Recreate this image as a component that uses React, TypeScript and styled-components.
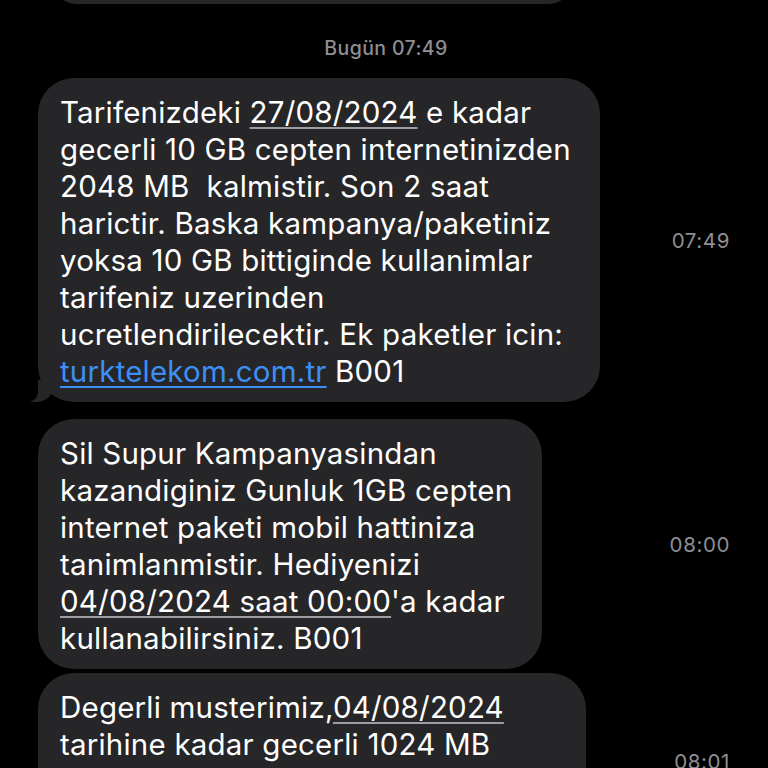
import React, { ReactElement } from "react";
import styled, { createGlobalStyle, css } from "styled-components";

const GlobalStyle = createGlobalStyle`
  html, body {
    margin: 0;
    padding: 0;
    background: #000;
    overflow: hidden;
  }
  body {
    font-family: Inter, "Noto Sans", "Liberation Sans", sans-serif;
    -webkit-font-smoothing: antialiased;
  }
`;

const Screen = styled.div`
  width: 768px;
  height: 768px;
  overflow: hidden;
  background: #000;
`;

const bubbleBase = css`
  background: #262628;
  border-radius: 36px;
  color: #fff;
`;

const PrevBubble = styled.div`
  ${bubbleBase}
  margin: -40px 0 0 54px;
  width: 517px;
  height: 44px;
`;

const DateHeader = styled.div`
  text-align: center;
  color: #8e8e93;
  font-size: 19.5px;
  font-weight: 500;
  letter-spacing: 0.4px;
  line-height: 24px;
  padding: 32px 0 18px 4px;
`;

const Row = styled.div<{ $gap: number }>`
  display: flex;
  align-items: center;
  padding: 0 38px;
  margin-bottom: ${(p) => p.$gap}px;
`;

const Bubble = styled.div<{ $width: number; $tail?: boolean }>`
  ${bubbleBase}
  position: relative;
  flex: none;
  box-sizing: border-box;
  width: ${(p) => p.$width}px;
  padding: 16px 22px 12px;
  font-size: 29.5px;
  line-height: 37px;
  letter-spacing: 0.2px;

  ${(p) =>
    p.$tail &&
    css`
      &::before {
        content: "";
        position: absolute;
        left: -8px;
        bottom: 0;
        width: 24px;
        height: 22px;
        background: #262628;
        border-bottom-right-radius: 18px 16px;
      }
      &::after {
        content: "";
        position: absolute;
        left: -14px;
        bottom: 0;
        width: 14px;
        height: 24px;
        background: #000;
        border-bottom-right-radius: 10px;
      }
    `}
`;

const Line = styled.span`
  display: block;
  white-space: pre;
`;

const Detected = styled.span`
  text-decoration: underline;
  text-decoration-color: rgba(235, 235, 245, 0.6);
  text-decoration-thickness: 2px;
  text-underline-offset: 4px;
`;

const Link = styled.span`
  color: #3d8ff5;
  text-decoration: underline;
  text-decoration-thickness: 2px;
  text-underline-offset: 4px;
`;

const Time = styled.div`
  margin-left: auto;
  color: #8e8e93;
  font-size: 20.5px;
  letter-spacing: 0.6px;
`;

interface MessageProps {
  width: number;
  time: string;
  tail?: boolean;
  gap: number;
  children: React.ReactNode;
}

function Message({ width, time, tail, gap, children }: MessageProps): ReactElement {
  return (
    <Row $gap={gap}>
      <Bubble $width={width} $tail={tail}>
        {children}
      </Bubble>
      <Time>{time}</Time>
    </Row>
  );
}

export default function App(): ReactElement {
  return (
    <Screen>
      <GlobalStyle />
      <PrevBubble />
      <DateHeader>Bugün 07:49</DateHeader>

      <Message width={562} time="07:49" tail gap={17}>
        <Line>
          Tarifenizdeki <Detected>27/08/2024</Detected> e kadar
        </Line>
        <Line>gecerli 10 GB cepten internetinizden</Line>
        <Line>2048 MB  kalmistir. Son 2 saat</Line>
        <Line>harictir. Baska kampanya/paketiniz</Line>
        <Line>yoksa 10 GB bittiginde kullanimlar</Line>
        <Line>tarifeniz uzerinden</Line>
        <Line>ucretlendirilecektir. Ek paketler icin:</Line>
        <Line>
          <Link>turktelekom.com.tr</Link> B001
        </Line>
      </Message>

      <Message width={504} time="08:00" gap={4}>
        <Line>Sil Supur Kampanyasindan</Line>
        <Line>kazandiginiz Gunluk 1GB cepten</Line>
        <Line>internet paketi mobil hattiniza</Line>
        <Line>tanimlanmistir. Hediyenizi</Line>
        <Line>
          <Detected>04/08/2024 saat 00:00</Detected>'a kadar
        </Line>
        <Line>kullanabilirsiniz. B001</Line>
      </Message>

      <Message width={548} time="08:01" gap={0}>
        <Line>
          Degerli musterimiz,<Detected>04/08/2024</Detected>
        </Line>
        <Line>tarihine kadar gecerli 1024 MB</Line>
        <Line>paketinizden 2044 MB 240 KB kaldi</Line>
        <Line>Ek paketler icin: B001</Line>
      </Message>
    </Screen>
  );
}
